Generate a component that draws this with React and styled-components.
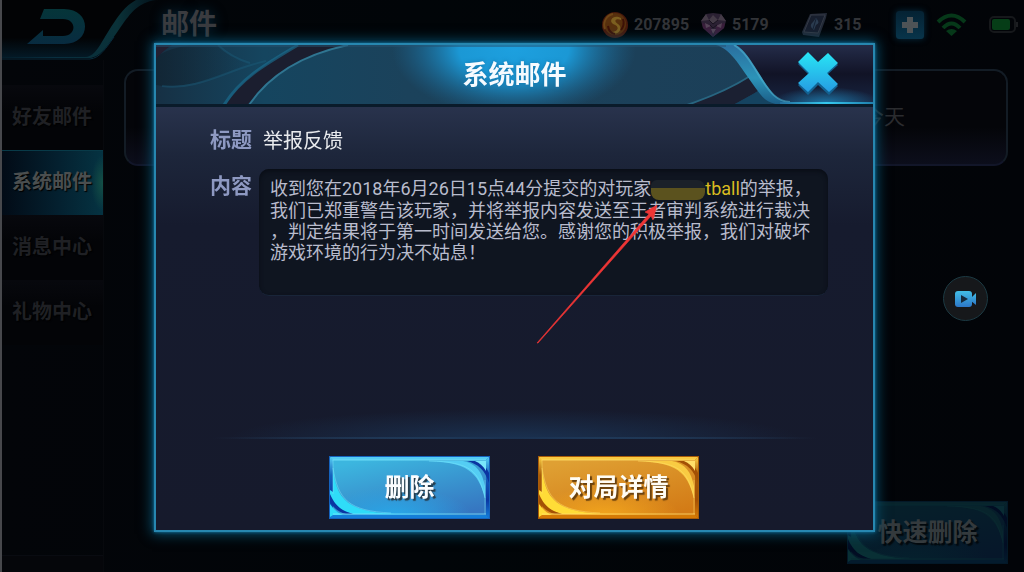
import React from "react";
import styled, { createGlobalStyle } from "styled-components";

const Global = createGlobalStyle`
  * { box-sizing: border-box; }
  body {
    margin: 0;
    background: #020408;
    font-family: Roboto, "Noto Sans CJK SC", sans-serif;
  }
  button { font: inherit; border: 0; padding: 0; background: none; cursor: pointer; }
  h1, h2, p, dl, dd, dt { margin: 0; }
  svg { display: block; }
`;

const Page = styled.div`
  min-height: 100vh;
  display: flex;
  flex-direction: column;
  border-left: 2px solid #47484c;
  background: linear-gradient(90deg, #030509, #010508 40%, #020408);
`;

const TopBar = styled.header`
  height: 60px;
  display: flex;
  align-items: flex-start;
`;

const BackButton = styled.button`
  width: 159px;
  height: 60px;
`;

const PageTitle = styled.h1`
  flex: 1;
  font-size: 28px;
  line-height: 50px;
  font-weight: 700;
  color: #3a3b3f;
  text-shadow: 0 0 12px #06283c;
`;

const Status = styled.div`
  display: flex;
  align-items: center;
  height: 50px;
  padding-right: 5px;
`;

const Currency = styled.div`
  width: ${(p) => p.$width}px;
  display: flex;
  align-items: center;
  gap: 5px;
  font-size: 16px;
  line-height: 20px;
  font-weight: 700;
  color: #323438;
`;

const AddButton = styled.button`
  width: 28px;
  height: 28px;
  border-radius: 3px;
  background: linear-gradient(#052233, #08344a);
  box-shadow: 0 0 6px #052c40;
  margin-right: 12px;
`;

const Wifi = styled.div`
  margin-right: 22px;
`;

const Columns = styled.div`
  flex: 1;
  display: flex;
`;

const SideNav = styled.nav`
  width: 102px;
  padding-top: 25px;
  display: flex;
  flex-direction: column;
  border-right: 1px solid #07090d;
`;

const NavItem = styled.button`
  height: 65px;
  font-size: 20px;
  font-weight: 700;
  text-align: left;
  padding: 0 0 5px 10px;
  white-space: nowrap;
  color: ${(p) => (p.$active ? "#4a4e4f" : "#1f2024")};
  text-shadow: 1px 1px 1px #000;
  background: ${(p) =>
    p.$active
      ? "radial-gradient(ellipse 12px 28px at 100% 50%, #145046, transparent), linear-gradient(90deg, #020b16, #04202f 55%, #053342)"
      : "linear-gradient(#07080d, #030407 40%)"};
  border-top: 1px solid ${(p) => (p.$active ? "#083a48" : "#07080d")};
`;

const NavFoot = styled.div`
  margin-top: auto;
  height: 17px;
  background: #05060a;
  border-top: 1px solid #090b11;
`;

const Main = styled.main`
  flex: 1;
  display: flex;
  flex-direction: column;
  justify-content: space-between;
  align-items: flex-end;
  padding: 9px 16px 8px 20px;
`;

const MailCard = styled.article`
  width: 100%;
  height: 97px;
  border: 2px solid #131c25;
  border-bottom-color: #121629;
  border-radius: 14px;
  background: linear-gradient(#040509 60%, #0c0e1b);
  display: flex;
  justify-content: flex-end;
  align-items: center;
  padding: 0 101px 5px 0;
  font-size: 21px;
  color: #2b2c2f;
`;

const RecordButton = styled.button`
  position: fixed;
  right: 36px;
  top: 276px;
  width: 45px;
  height: 45px;
  border-radius: 50%;
  border: 1px solid #1c3a43;
  background: #16181b;
  display: grid;
  place-items: center;
`;

const Overlay = styled.div`
  position: fixed;
  inset: 0;
  display: flex;
  padding: 43px 149px 40px 154px;
`;

const Dialog = styled.section`
  flex: 1;
  min-width: 0;
  display: flex;
  flex-direction: column;
  border: 2px solid #2787b0;
  box-shadow: 0 0 3px #1677a4, 0 0 12px 2px #07506f;
  background: linear-gradient(#29334d 60px, #1d263b 110px, #161b2e 180px, #161a2c);
`;

const DialogHeader = styled.header`
  position: relative;
  height: 62px;
  display: flex;
  align-items: center;
  justify-content: center;
  border-bottom: 3px solid #0a1b2a;
`;

const HeaderArt = styled.svg`
  position: absolute;
  inset: 0;
  width: 100%;
  height: 100%;
`;

const DialogTitle = styled.h2`
  position: relative;
  font-size: 26px;
  line-height: 36px;
  font-weight: 700;
  color: #f6fbff;
  text-shadow: 0 0 4px #1574a8;
`;

const CloseButton = styled.button`
  position: absolute;
  right: 34px;
  top: 6px;
  width: 42px;
  height: 44px;
`;

const Fields = styled.dl`
  flex: 1;
  display: grid;
  grid-template-columns: auto 1fr;
  grid-template-rows: 30px auto 1fr;
  gap: 14px 7px;
  padding: 18px 45px 0 54px;
`;

const Label = styled.dt`
  font-size: 21px;
  line-height: ${(p) => (p.$tall ? 34 : 30)}px;
  font-weight: 700;
  color: #8e99c2;
`;

const Subject = styled.dd`
  padding-left: 4px;
  font-size: 20px;
  line-height: 32px;
  color: #e9ebee;
`;

const Content = styled.dd`
  position: relative;
  min-height: 127px;
  padding: 9px 11px;
  border-radius: 10px;
  background: #0f1520;
  border-bottom: 1px solid #192539;
  box-shadow: inset 0 2px 4px #090d15;
  font-size: 18px;
  line-height: 21px;
  color: #b9bccd;
`;

const Line = styled.p`
  white-space: nowrap;
`;

const Player = styled.span`
  color: #d8bb20;
`;

const Mask = styled.span`
  display: inline-block;
  width: 54px;
  height: 20px;
  vertical-align: -5px;
  border-radius: 6px 8px 8px 8px;
  background: linear-gradient(#1b2129 8px, #5b521e 8px);
`;

const Arrow = styled.svg`
  position: absolute;
  left: 277px;
  top: 35px;
  pointer-events: none;
`;

const Actions = styled.footer`
  position: relative;
  display: flex;
  justify-content: center;
  gap: 48px;
  padding: 17px 1px 11px 0;
  border-top: 2px solid;
  border-image: linear-gradient(90deg, transparent 8%, #294a6b 40%, #294a6b 60%, transparent 92%) 1;
  &::before {
    content: "";
    position: absolute;
    left: 10%;
    right: 10%;
    bottom: 100%;
    height: 30px;
    background: radial-gradient(ellipse 50% 100% at 50% 100%, #1a3150, transparent);
  }
`;

const GameButtonFrame = styled.button`
  position: relative;
  width: 161px;
  height: 63px;
  color: ${(p) => p.$color};
  font-size: 25px;
  line-height: 58px;
  font-weight: 700;
  text-shadow: 2px 2px 1px ${(p) => p.$shadow};
  > svg { position: absolute; inset: 0; }
  > span { position: relative; }
`;

const tones = {
  blue: {
    text: "#fbfdff", shadow: "#273c4a", edge: "#1562bd", top: "#54cdf3", bottom: "#147ed8",
    dark: "#0a35a2", a: "#3cb6df", b: "#3676c1", glow: "#28a8e8", shine: "#2fdcf8", line: "#79e5fb",
  },
  gold: {
    text: "#fffdf5", shadow: "#69410e", edge: "#a85b08", top: "#f9cb42", bottom: "#d57a05",
    dark: "#a35005", a: "#dfa033", b: "#d37b16", glow: "#f2a51d", shine: "#ffdc37", line: "#ffdf69",
  },
  dim: {
    text: "#343a3d", shadow: "#03090d", edge: "#031827", top: "#08242c", bottom: "#041b2d",
    dark: "#020d23", a: "#06202a", b: "#06172a", glow: "#05202d", shine: "#093035", line: "#092b33",
  },
};

function GameButton({ tone, children }) {
  const t = tones[tone];
  return (
    <GameButtonFrame type="button" $color={t.text} $shadow={t.shadow}>
      <svg width="161" height="63" viewBox="0 0 161 63" aria-hidden="true">
        <defs>
          <linearGradient id={`${tone}-panel`} x1="0.2" y1="0" x2="0.8" y2="1">
            <stop offset="0" stopColor={t.a} />
            <stop offset="1" stopColor={t.b} />
          </linearGradient>
          <radialGradient id={`${tone}-glow`} cx="0.4" cy="1" r="0.5">
            <stop offset="0" stopColor={t.glow} />
            <stop offset="1" stopColor={t.glow} stopOpacity="0" />
          </radialGradient>
          <linearGradient id={`${tone}-outer`} x1="0" y1="0" x2="0" y2="1">
            <stop offset="0" stopColor={t.top} />
            <stop offset="0.3" stopColor={t.edge} />
            <stop offset="0.7" stopColor={t.dark} />
            <stop offset="1" stopColor={t.bottom} />
          </linearGradient>
        </defs>
        <rect width="161" height="63" fill={t.edge} />
        <path d="M1 1L5 5V58L1 62ZM160 1L156 5V58L160 62Z" fill={`url(#${tone}-outer)`} />
        <path d="M1 1H160L156 5H4Z" fill={t.top} />
        <path d="M1 62H160L156 58H4Z" fill={t.bottom} />
        <rect x="4" y="4" width="153" height="55" fill={t.b} />
        <path d="M4 4H157V59H4Z" fill={`url(#${tone}-panel)`} />
        <path d="M4 4H157V59H4Z" fill={`url(#${tone}-glow)`} />
        <path d="M4 14C8 42 17 56 66 58H24C13 55 6 50 1 42V34L4 36Z" fill={t.shine} />
        <path d="M1 38C6 50 13 55 24 58H17C9 56 4 51 1 46Z" fill={t.dark} />
        <path d="M1 48C5 54 9 57 14 59H4L1 61Z" fill={t.shine} />
        <path d="M96 5C139 6 149 16 156 42V30C153 16 148 8 134 5Z" fill={t.top} />
        <path d="M138 5C149 8 156 14 160 27V17C157 10 152 6 146 5Z" fill={t.dark} />
        <path d="M146 5H157V15C154 10 151 7 146 5Z" fill={t.line} />
        <path d="M4 12C9 44 20 55 62 57M100 5C142 6 150 15 156 42" fill="none" stroke={t.line} strokeOpacity="0.5" />
        <path d="M4 4H157M4 58H157" stroke={t.line} strokeOpacity="0.8" />
        <path d="M4 4V38M156 24V58" stroke={t.line} strokeOpacity="0.5" />
        <rect x="0.5" y="0.5" width="160" height="62" fill="none" stroke={t.edge} />
      </svg>
      <span>{children}</span>
    </GameButtonFrame>
  );
}

function BackArt() {
  return (
    <svg width="159" height="60" viewBox="0 0 159 60" aria-hidden="true">
      <defs>
        <linearGradient id="backLine" x1="0" x2="1">
          <stop offset="0" stopColor="#041c29" />
          <stop offset="0.35" stopColor="#082f40" />
          <stop offset="0.75" stopColor="#0a3138" />
          <stop offset="1" stopColor="#03121b" />
        </linearGradient>
        <linearGradient id="backGlow" x1="0" y1="0" x2="0" y2="1">
          <stop offset="0.65" stopColor="#020305" />
          <stop offset="1" stopColor="#041a27" />
        </linearGradient>
        <linearGradient id="backArrow" x1="0" y1="0" x2="0" y2="1">
          <stop offset="0" stopColor="#053539" />
          <stop offset="1" stopColor="#082b40" />
        </linearGradient>
      </defs>
      <path d="M0 0H134C120 10 103 54 84 58H0Z" fill="url(#backGlow)" />
      <path d="M0 58H88C99 57 106 45 118 28C130 11 136 3 154 0H134C123 6 117 15 109 27C98 44 94 56 84 57H0Z" fill="url(#backLine)" />
      <path d="M0 59H88C98 58 104 48 112 37" fill="none" stroke="#082b3d" />
      <path d="M42 9H62C90 9 90 44 62 44H25L41 30V36H61C75 36 75 19 61 19H38Z" fill="url(#backArrow)" />
    </svg>
  );
}

function DialogHeaderArt() {
  return (
    <HeaderArt viewBox="0 0 717 59" preserveAspectRatio="none" aria-hidden="true">
      <defs>
        <linearGradient id="hBase" x1="0" x2="1">
          <stop offset="0" stopColor="#163044" />
          <stop offset="0.15" stopColor="#15455f" />
          <stop offset="0.35" stopColor="#1b425b" />
          <stop offset="1" stopColor="#1c3e57" />
        </linearGradient>
        <radialGradient id="hGlow" cx="358" cy="0" r="1" gradientUnits="userSpaceOnUse" gradientTransform="translate(358 4) scale(122 68) translate(-358 0)">
          <stop offset="0" stopColor="#1da0df" />
          <stop offset="0.45" stopColor="#1b98d5" />
          <stop offset="1" stopColor="#1b6c9c" stopOpacity="0" />
        </radialGradient>
        <linearGradient id="hRight" x1="0" y1="0" x2="0" y2="1">
          <stop offset="0" stopColor="#242c49" />
          <stop offset="0.5" stopColor="#111326" />
          <stop offset="1" stopColor="#172440" />
        </linearGradient>
        <linearGradient id="ribbon" x1="0" y1="0" x2="0" y2="1">
          <stop offset="0" stopColor="#2a6f9f" />
          <stop offset="0.55" stopColor="#2c93b8" />
          <stop offset="1" stopColor="#1a5b85" />
        </linearGradient>
        <radialGradient id="closeGlow">
          <stop offset="0" stopColor="#1e87bd" stopOpacity="0.8" />
          <stop offset="1" stopColor="#1e87bd" stopOpacity="0" />
        </radialGradient>
        <linearGradient id="baseLine" gradientUnits="userSpaceOnUse" x1="624" x2="717" y1="0" y2="0">
          <stop offset="0" stopColor="#236f9d" />
          <stop offset="0.5" stopColor="#36c9ef" />
          <stop offset="1" stopColor="#207fac" />
        </linearGradient>
        <linearGradient id="leafDark" x1="0" y1="0" x2="1" y2="0">
          <stop offset="0" stopColor="#10222f" stopOpacity="0.7" />
          <stop offset="1" stopColor="#10222f" stopOpacity="0" />
        </linearGradient>
        <clipPath id="artBox"><rect width="717" height="59" /></clipPath>
      </defs>
      <g clipPath="url(#artBox)">
        <rect width="717" height="59" fill="url(#hBase)" />
        <path d="M0 12C20 -2 45 0 62 0C72 9 82 15 92 18C65 33 35 42 6 41L0 40Z" fill="url(#leafDark)" />
        <path d="M0 0H16C10 4 5 8 0 14Z" fill="#231f31" />
        <path d="M62 0Q74 12 94 18M6 41C42 46 72 24 110 16" fill="none" stroke="#1d6585" strokeOpacity="0.35" strokeWidth="2" />
        <path d="M142 0C108 20 86 34 70 60H93C112 32 145 12 190 0Z" fill="#1b1e2f" />
        <path d="M142 0C108 20 84 34 68 60" fill="none" stroke="#1b7295" strokeWidth="3" strokeOpacity="0.6" />
        <path d="M93 60C112 32 145 10 192 0" fill="none" stroke="#2f7591" strokeWidth="2" />
        <path d="M531 60C560 50 575 43 595 30L606 44L577 60Z" fill="#1b2032" />
        <path d="M577 60C585 56 598 49 603 45L618 60Z" fill="#154360" />
        <path d="M531 60C560 50 577 42 594 31" fill="none" stroke="#286580" strokeWidth="2" />
        <rect x="206" width="304" height="59" fill="url(#hGlow)" />
        <path d="M572 0C584 4 588 13 598 28C609 45 614 57 630 58H717V0Z" fill="url(#hRight)" />
        <ellipse cx="670" cy="58" rx="54" ry="16" fill="url(#closeGlow)" />
        <path d="M560 0H580C589 5 594 15 602 27C612 42 619 56 632 57H636V60H630C610 60 606 52 596 38C582 18 574 4 560 0Z" fill="url(#ribbon)" />
        <path d="M578 0C590 7 597 21 606 35C614 47 620 56 634 57" fill="none" stroke="#4db0cf" strokeOpacity="0.6" strokeWidth="2" />
        <rect x="624" y="57" width="93" height="2" fill="url(#baseLine)" />
        <path d="M0 1H570" stroke="#265371" />
      </g>
    </HeaderArt>
  );
}

function CloseIcon() {
  return (
    <svg width="42" height="44" viewBox="0 0 42 44" aria-hidden="true">
      <defs>
        <linearGradient id="closeFill" x1="0" y1="0" x2="0" y2="1">
          <stop offset="0" stopColor="#28e6f5" />
          <stop offset="1" stopColor="#269ce2" />
        </linearGradient>
      </defs>
      <path transform="translate(1 3)" d="M10 0L20 10L30 1L40 11L29 21L40 32L31 41L20 31L10 41L0 31L11 21L0 10Z" fill="#126292" />
      <path transform="translate(1 1)" d="M10 0L20 10L30 1L40 11L29 21L40 32L31 40L20 30L10 40L0 31L11 21L0 10Z" fill="url(#closeFill)" />
    </svg>
  );
}

function CoinIcon() {
  return (
    <svg width="28" height="28" viewBox="0 0 28 28" aria-hidden="true">
      <circle cx="14" cy="14" r="13" fill="#48190b" />
      <circle cx="14" cy="13" r="11" fill="#57300e" />
      <path d="M4 18A11 11 0 0 1 12 3" fill="none" stroke="#6e4516" strokeWidth="2" />
      <path d="M20 7C13 3 7 9 12 13C19 15 18 21 10 21C17 26 23 17 17 13C12 10 15 7 20 9Z" fill="#7c5f20" />
      <path d="M7 15Q8 22 14 23M22 8Q24 14 20 19" fill="none" stroke="#3d1107" strokeWidth="2" />
    </svg>
  );
}

function GemIcon() {
  return (
    <svg width="27" height="26" viewBox="0 0 27 26" aria-hidden="true">
      <path d="M6 2L13 1L21 2L26 9L24 16L13 25L3 16L1 9Z" fill="#2b2133" />
      <path d="M6 2L9 8L1 9ZM21 2L18 8L26 9ZM9 8L13 3L18 8L13 12Z" fill="#443b47" />
      <path d="M2 11L10 13L13 25L3 16ZM25 11L17 13L13 25L24 16Z" fill="#3a1e3b" />
      <path d="M5 11L11 14L6 16ZM22 11L16 14L21 16ZM11 17H16L13 22Z" fill="#554457" />
      <path d="M9 8L13 12L18 8M10 13L13 16L17 13" fill="none" stroke="#19131f" />
    </svg>
  );
}

function CardIcon() {
  return (
    <svg width="28" height="26" viewBox="0 0 28 26" aria-hidden="true">
      <path d="M9 2L26 1L25 6L18 25L2 23L1 20Z" fill="#222936" />
      <path d="M10 3L24 3L17 21L3 20Z" fill="#171e2d" stroke="#343945" />
      <path d="M15 6Q20 11 15 13L13 18Q7 14 12 10Z" fill="#2b3c50" />
      <path d="M15 7L12 17" stroke="#152032" />
    </svg>
  );
}

export default function App() {
  const nav = ["好友邮件", "系统邮件", "消息中心", "礼物中心"];
  return (
    <>
      <Global />
      <Page>
        <TopBar>
          <BackButton type="button" aria-label="返回"><BackArt /></BackButton>
          <PageTitle>邮件</PageTitle>
          <Status>
            <Currency $width={99}><CoinIcon />207895</Currency>
            <Currency $width={101}><GemIcon />5179</Currency>
            <Currency $width={95}><CardIcon />315</Currency>
            <AddButton type="button" aria-label="添加">
              <svg width="28" height="28" viewBox="0 0 28 28" aria-hidden="true">
                <path d="M11 6H17V11H22V17H17V22H11V17H6V11H11Z" fill="#4e5356" />
              </svg>
            </AddButton>
            <Wifi>
              <svg width="31" height="24" viewBox="0 0 31 24" aria-hidden="true">
                <g fill="none" stroke="#063819" strokeWidth="4">
                  <path d="M2 9Q15.500 -4 29 9" />
                  <path d="M7 15Q15.500 6 24 15" />
                </g>
                <path d="M10 18Q15.500 14 21 18L15.500 23Z" fill="#063819" />
              </svg>
            </Wifi>
            <svg width="30" height="18" viewBox="0 0 30 18" aria-hidden="true">
              <rect x="1" y="1" width="25" height="15" rx="4" fill="none" stroke="#16181b" strokeWidth="2" />
              <path d="M28 6V11" stroke="#1c1e21" strokeWidth="2" />
              <rect x="3" y="3" width="18" height="11" rx="2" fill="#063d17" />
            </svg>
          </Status>
        </TopBar>
        <Columns>
          <SideNav>
            {nav.map((name, i) => (
              <NavItem key={name} type="button" $active={i === 1}>{name}</NavItem>
            ))}
            <NavFoot />
          </SideNav>
          <Main>
            <MailCard><time>今天</time></MailCard>
            <GameButton tone="dim">快速删除</GameButton>
          </Main>
        </Columns>
      </Page>

      <Overlay>
        <Dialog role="dialog" aria-labelledby="dialog-title">
          <DialogHeader>
            <DialogHeaderArt />
            <DialogTitle id="dialog-title">系统邮件</DialogTitle>
            <CloseButton type="button" aria-label="关闭"><CloseIcon /></CloseButton>
          </DialogHeader>
          <Fields>
            <Label>标题</Label>
            <Subject>举报反馈</Subject>
            <Label $tall>内容</Label>
            <Content>
              <Line>
                收到您在2018年6月26日15点44分提交的对玩家<Player><Mask />tball</Player>的举报，
              </Line>
              <Line>我们已郑重警告该玩家，并将举报内容发送至王者审判系统进行裁决</Line>
              <Line>，判定结果将于第一时间发送给您。感谢您的积极举报，我们对破坏</Line>
              <Line>游戏环境的行为决不姑息！</Line>
              <Arrow width="126" height="140" viewBox="0 0 126 140" aria-hidden="true">
                <path d="M1 139L113 10L109 8L121 1L117 16L115 12L2 139Z" fill="#ee3535" stroke="#ee3535" strokeWidth="0.6" />
              </Arrow>
            </Content>
          </Fields>
          <Actions>
            <GameButton tone="blue">删除</GameButton>
            <GameButton tone="gold">对局详情</GameButton>
          </Actions>
        </Dialog>
      </Overlay>

      <RecordButton type="button" aria-label="录制">
        <svg width="24" height="18" viewBox="0 0 24 18" aria-hidden="true">
          <defs>
            <linearGradient id="cam" x1="0" y1="0" x2="0" y2="1">
              <stop offset="0" stopColor="#42bde5" />
              <stop offset="1" stopColor="#2c77c8" />
            </linearGradient>
          </defs>
          <rect x="1" y="1" width="17" height="16" rx="3" fill="url(#cam)" />
          <path d="M17 8L22 3V15L17 11Z" fill="url(#cam)" />
          <path d="M7 5L14 9L7 13Z" fill="#152a3c" />
        </svg>
      </RecordButton>
    </>
  );
}
